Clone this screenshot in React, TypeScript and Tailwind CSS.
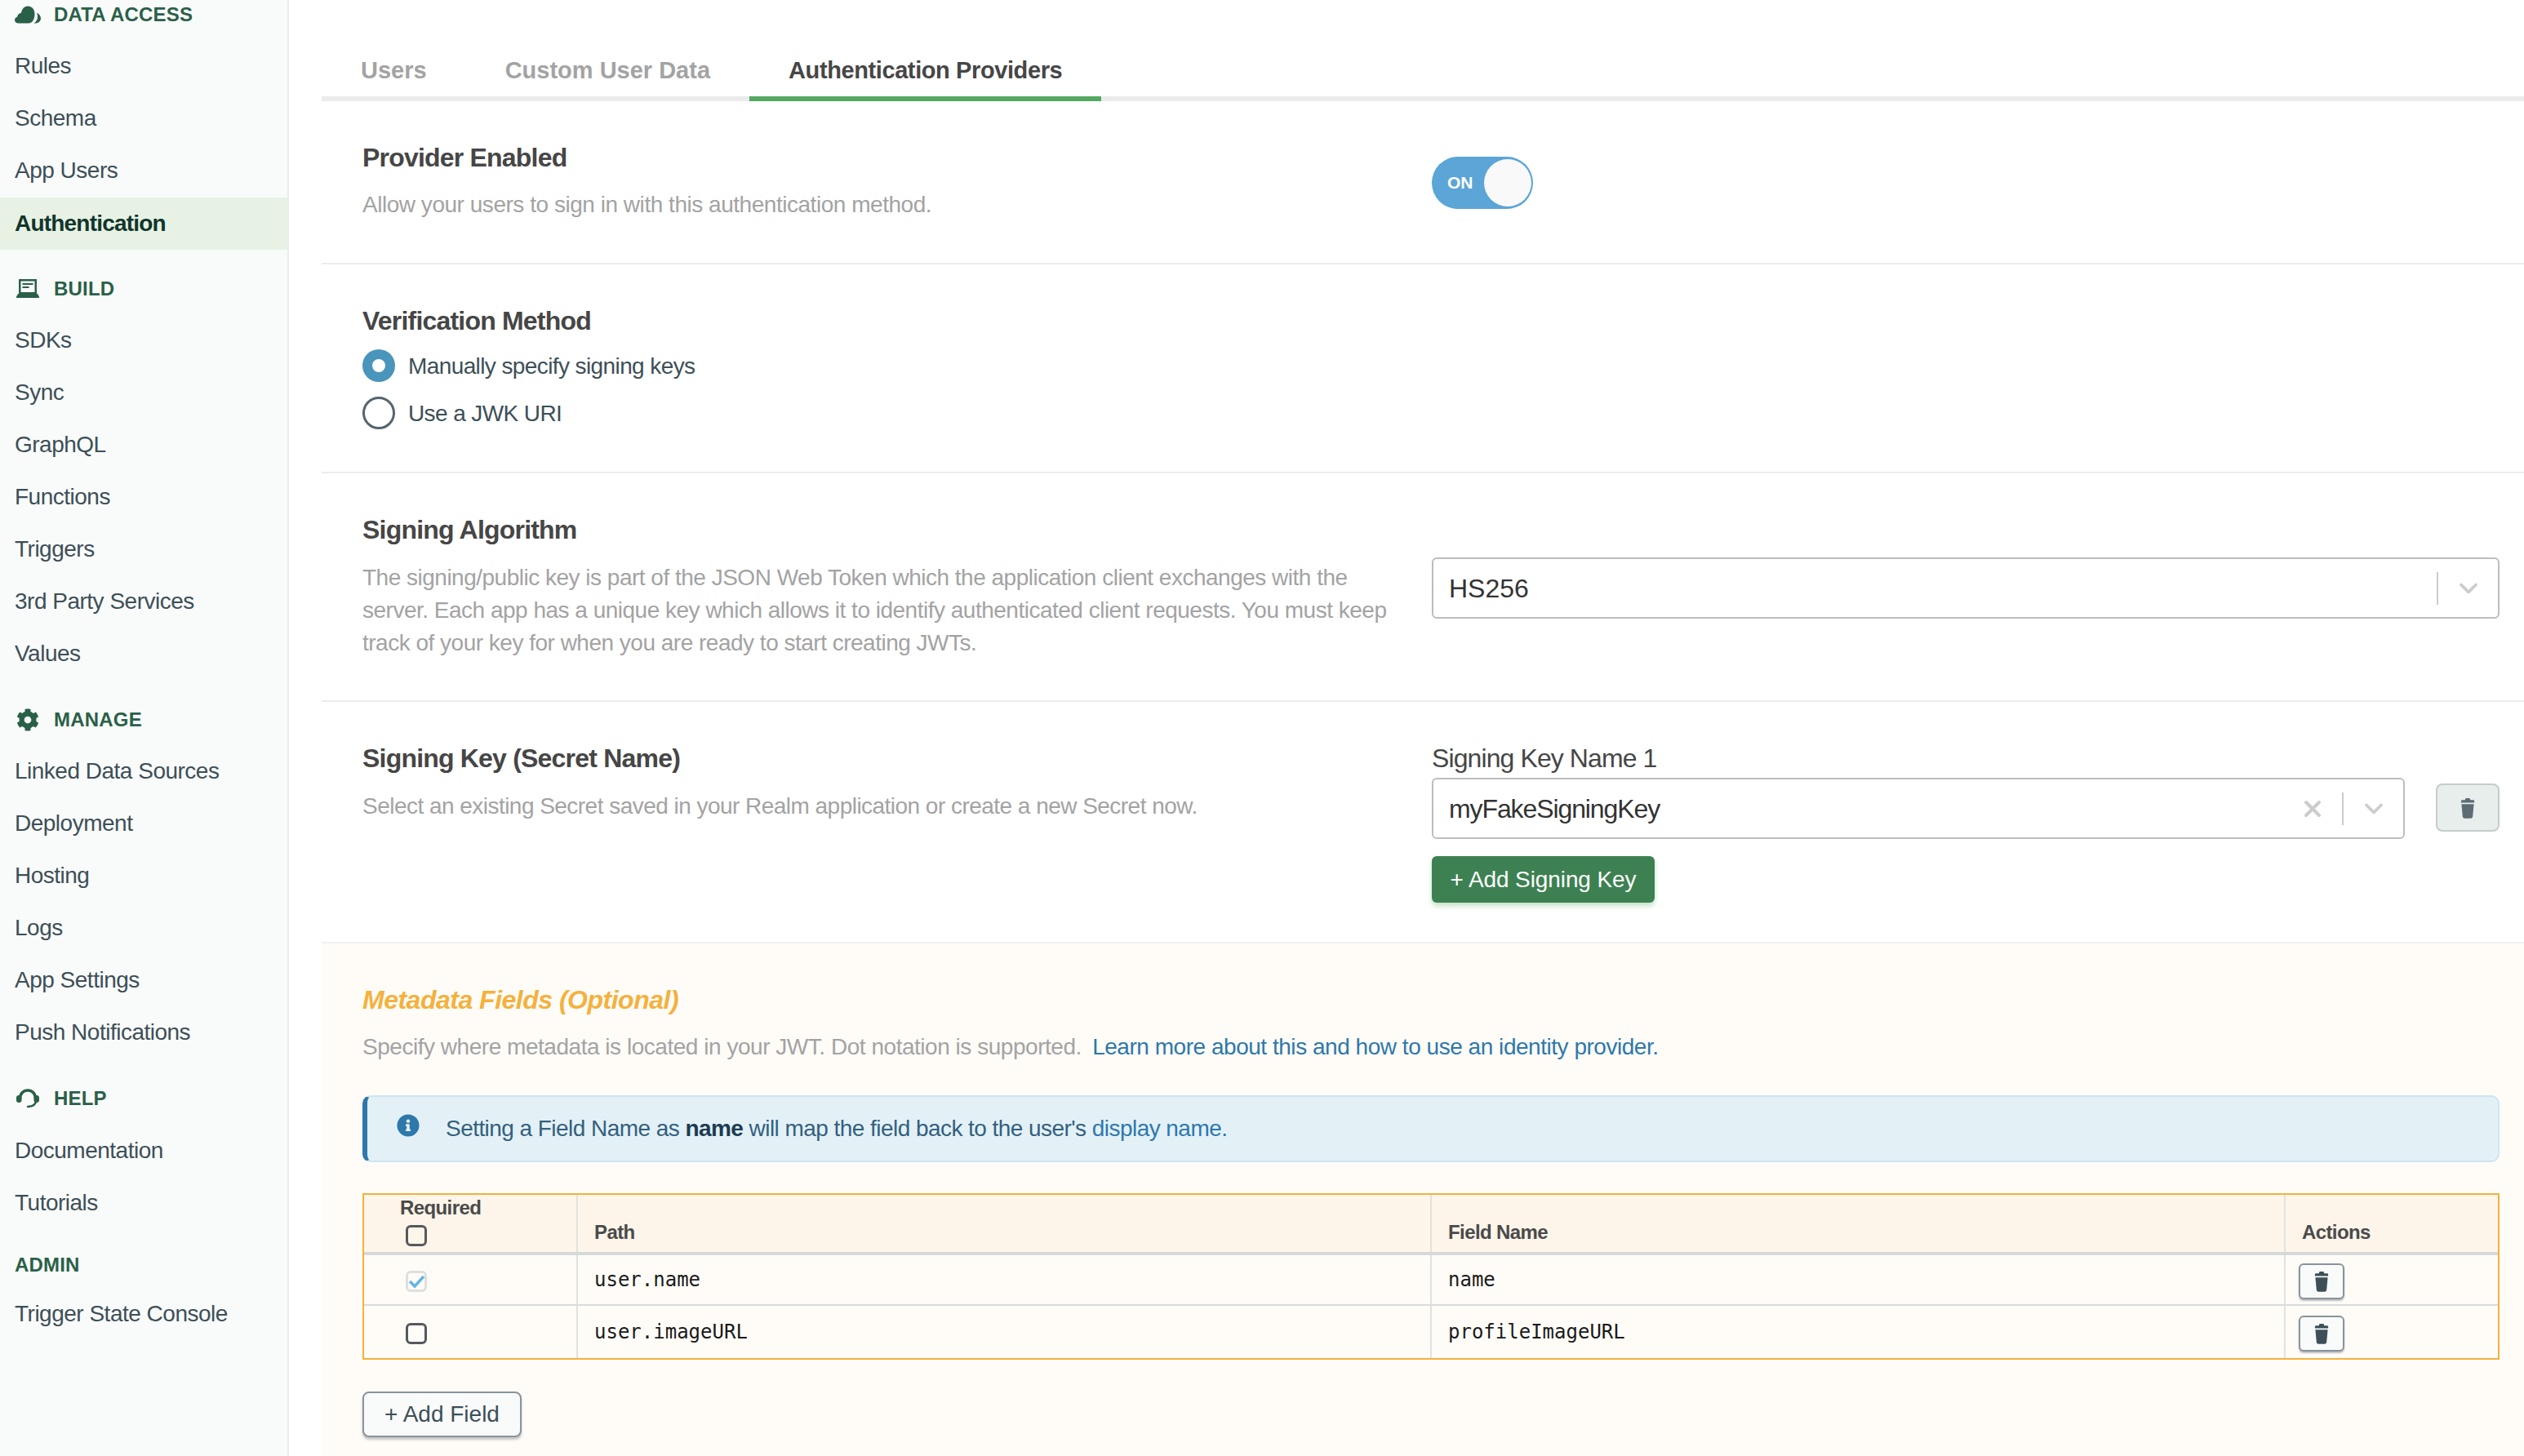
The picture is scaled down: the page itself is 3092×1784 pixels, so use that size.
import { ChevronDown, X } from "lucide-react";
import { FaCog, FaInfoCircle } from "react-icons/fa";

const sans = "font-['Liberation_Sans',Arial,sans-serif]";

function CloudIcon() {
  return (
    <svg viewBox="0 0 32 22" className="h-[22px] w-8 fill-[#2a6048]" aria-hidden="true">
      <path d="M4 21.500c-2.400 0-4-1.700-4-3.900 0-2 1.300-3.400 3-3.900C3.600 10.700 5.600 9 8 9c.6-4.800 3.700-8.500 8-8.500 4.800 0 8.500 3.800 8.500 9.500 0 5.800-2.500 11.500-7.500 11.500z" />
      <path d="M27 8.500c3 1.600 5 4.300 5 7 0 3.300-2.700 6-7 6h-1.500c3-2 4.600-4.800 4.600-7.800 0-1.800-.4-3.500-1.100-5.200z" />
    </svg>
  );
}

function BuildIcon() {
  return (
    <svg viewBox="0 0 28 23" className="h-[23px] w-7 fill-[#2a6048]" aria-hidden="true">
      <path fillRule="evenodd" d="M3 0h22v18.500H3zM5.500 2.500v13.500h17V2.500z" />
      <rect x="7.500" y="5" width="13" height="2" />
      <rect x="7.500" y="9" width="8" height="2" />
      <path d="M2 18h24l2 3.500a1.200 1.200 0 0 1-1 1.500H1a1.200 1.200 0 0 1-1-1.500z" />
    </svg>
  );
}

function HelpIcon() {
  return (
    <svg viewBox="0 0 28 24" className="h-6 w-7" aria-hidden="true">
      <path d="M4.500 12.500C4.500 6 8.500 2 14 2s9.500 4 9.500 10.500" fill="none" stroke="#2a6048" strokeWidth="3.500" />
      <rect x="0" y="8" width="6.500" height="9" rx="3.200" fill="#2a6048" />
      <rect x="21.500" y="8" width="6.500" height="9" rx="3.200" fill="#2a6048" />
      <path d="M24 15c0 4-3.500 6.500-10 7" fill="none" stroke="#2a6048" strokeWidth="2.500" strokeLinecap="round" />
    </svg>
  );
}

function TrashIcon({ className }: { className: string }) {
  return (
    <svg viewBox="0 0 20 24" className={className} aria-hidden="true">
      <path d="M2.500 4.300a1.300 1.300 0 0 1 1.300-1.300H7l.7-2h4.600l.7 2h3.200a1.300 1.300 0 0 1 1.300 1.300V6h-15z" />
      <path d="M3 7.500h14l-1.300 14.300a2 2 0 0 1-2 1.900H6.300a2 2 0 0 1-2-1.900z" />
    </svg>
  );
}

function Checkbox({ checked = false }: { checked?: boolean }) {
  return (
    <svg viewBox="0 0 26 26" className="h-[26px] w-[26px]" aria-hidden="true">
      <rect x="1.500" y="1.500" width="23" height="23" rx="4.500" fill="none" stroke={checked ? "#dfdfdd" : "#55595c"} strokeWidth="3" />
      {checked && <path d="M5 13l6 6L22 7" fill="none" stroke="#62b5e5" strokeWidth="3.500" />}
    </svg>
  );
}

const navGroups = [
  { title: "DATA ACCESS", icon: <CloudIcon />, head: "h-[49px] pb-[13px]", items: ["Rules", "Schema", "App Users", "Authentication"] },
  { title: "BUILD", icon: <BuildIcon />, head: "h-[79px] pt-[16px]", items: ["SDKs", "Sync", "GraphQL", "Functions", "Triggers", "3rd Party Services", "Values"] },
  { title: "MANAGE", icon: <FaCog className="h-7 w-7 text-[#2a6048]" />, head: "h-[80px] pt-[18px]", items: ["Linked Data Sources", "Deployment", "Hosting", "Logs", "App Settings", "Push Notifications"] },
  { title: "HELP", icon: <HelpIcon />, head: "h-[81px] pt-[16px]", items: ["Documentation", "Tutorials"] },
  { title: "ADMIN", icon: null, head: "h-[72px] pt-[16px]", items: ["Trigger State Console"] },
];

function Sidebar() {
  return (
    <aside className="w-[354px] shrink-0 border-r-2 border-[#e7eeec] bg-[#f9fbfa]">
      {navGroups.map((group) => (
        <div key={group.title}>
          <div className={`flex items-center gap-[16px] pl-[18px] ${group.head}`}>
            {group.icon && <span className="flex w-8 justify-center">{group.icon}</span>}
            <span className="text-[24px] font-bold tracking-[0.2px] text-[#2a6048]">{group.title}</span>
          </div>
          {group.items.map((item) =>
            item === "Authentication" ? (
              <div key={item} className="mt-px flex h-16 items-center bg-[#e7f2e5] pl-[18px] text-[28px] font-bold tracking-[-0.8px] text-[#11362b]">
                {item}
              </div>
            ) : (
              <div key={item} className="flex h-16 items-center pl-[18px] text-[28px] tracking-[-0.5px] text-[#3d4f58]">
                {item}
              </div>
            ),
          )}
        </div>
      ))}
    </aside>
  );
}

function Title({ children }: { children: string }) {
  return <h2 className="text-[32px] font-bold leading-10 tracking-[-0.8px] text-[#464646]">{children}</h2>;
}

function Select({ value, clearable = false }: { value: string; clearable?: boolean }) {
  return (
    <div className="flex h-[75px] flex-1 items-center rounded-md border-2 border-[#bdbdbd] bg-white pl-[19px] pr-[18px]">
      <span className={`flex-1 text-[32px] text-[#333333] ${clearable ? "tracking-[-1.1px]" : "tracking-normal"}`}>{value}</span>
      {clearable && <X className="mr-[20px] h-8 w-8 text-[#cccccc]" strokeWidth={3} />}
      <span className="mr-[19px] h-10 w-0.5 bg-[#cccccc]" />
      <ChevronDown className="h-9 w-9 text-[#cccccc]" strokeWidth={2.5} />
    </div>
  );
}

function Radio({ on, label }: { on: boolean; label: string }) {
  return (
    <label className="flex h-[58px] items-center gap-4 text-[28px] tracking-[-0.6px] text-[#3d4f58]">
      {on ? (
        <span className="flex h-10 w-10 items-center justify-center rounded-full bg-[#4a95bb]">
          <span className="h-4 w-4 rounded-full bg-white" />
        </span>
      ) : (
        <span className="h-10 w-10 rounded-full border-[3px] border-[#55656f]" />
      )}
      <span className="mt-0.5">{label}</span>
    </label>
  );
}

const fieldRows = [
  { path: "user.name", field: "name", required: true, height: "h-[62px]", line: "border-b-2 border-[#d9dcdd]" },
  { path: "user.imageURL", field: "profileImageURL", required: false, height: "h-[64px]", line: "" },
];

const gridCols = "grid grid-cols-[260px_1046px_1046px_1fr]";

function FieldTable() {
  return (
    <div className="mt-[38px] border-2 border-[#f4b13d]">
      <div className={`${gridCols} h-[74px] border-b-4 border-[#d6d9da] bg-[#fdf5e9] text-[24px] font-bold tracking-[-0.6px] text-[#4a4a4a]`}>
        <div className="flex flex-col pl-[44px] pt-[2px]">
          <span className="leading-7">Required</span>
          <span className="ml-[7px] mt-[7px]"><Checkbox /></span>
        </div>
        <div className="flex items-end border-l-2 border-[#e1e1df] pb-[6px] pl-5">Path</div>
        <div className="flex items-end border-l-2 border-[#e1e1df] pb-[6px] pl-5">Field Name</div>
        <div className="flex items-end border-l-2 border-[#e1e1df] pb-[6px] pl-5">Actions</div>
      </div>
      {fieldRows.map((row) => (
        <div key={row.path} className={`${gridCols} ${row.height} ${row.line} font-['DejaVu_Sans_Mono',monospace] text-[24px] text-[#1a1a1a]`}>
          <div className="flex items-center pl-[51px] pt-[3px]"><Checkbox checked={row.required} /></div>
          <div className="flex items-center border-l-2 border-[#e1e1df] pl-5">{row.path}</div>
          <div className="flex items-center border-l-2 border-[#e1e1df] pl-5">{row.field}</div>
          <div className="flex items-center border-l-2 border-[#e1e1df] pl-4 pt-[3px]">
            <button className="flex h-[44px] w-[56px] items-center justify-center rounded-md border-2 border-[#88949b] bg-[#f9fbfa] shadow-[0_2px_2px_rgba(60,70,80,0.35)]" type="button">
              <TrashIcon className="h-[26px] w-[22px] fill-[#3d4f58]" />
            </button>
          </div>
        </div>
      ))}
    </div>
  );
}

export default function App() {
  return (
    <div className={`flex h-[1784px] w-[3092px] overflow-hidden bg-white ${sans}`}>
      <Sidebar />
      <main className="ml-10 flex flex-1 flex-col">
        <nav className="flex h-[124px] border-b-[6px] border-[#ebebed] text-[29px] font-bold">
          <a className="flex h-[124px] items-end px-12 pb-[16px] text-[#a3a3a3]">Users</a>
          <a className="flex h-[124px] items-end px-12 pb-[16px] text-[#a3a3a3]">Custom User Data</a>
          <a className="flex h-[124px] items-end border-b-[6px] border-[#54a862] px-12 pb-[10px] tracking-[-0.4px] text-[#464646]">Authentication Providers</a>
        </nav>

        <section className="flex h-[200px] border-b-2 border-[#ececec] pl-[50px] pr-[30px] pt-[49px]">
          <div className="w-[1310px]">
            <Title>Provider Enabled</Title>
            <p className="mt-[18px] text-[28px] leading-10 tracking-[-0.47px] text-[#a3a3a3]">Allow your users to sign in with this authentication method.</p>
          </div>
          <div className="mt-[19px] flex h-16 w-[124px] items-center justify-between rounded-full bg-[#5ba5d7] pl-[19px] pr-[2px] text-[21px] font-bold text-white">
            ON
            <span className="h-[58px] w-[58px] rounded-full bg-[#f9f9f9]" />
          </div>
        </section>

        <section className="h-[256px] border-b-2 border-[#ececec] pl-[50px] pt-[49px]">
          <Title>Verification Method</Title>
          <div className="mt-[6px]">
            <Radio on label="Manually specify signing keys" />
            <Radio on={false} label="Use a JWK URI" />
          </div>
        </section>

        <section className="flex h-[280px] border-b-2 border-[#ececec] pl-[50px] pr-[30px] pt-[49px]">
          <div className="w-[1310px]">
            <Title>Signing Algorithm</Title>
            <p className="mt-[19px] w-[1260px] text-[28px] leading-10 tracking-[-0.5px] text-[#a3a3a3]">
              The signing/public key is part of the JSON Web Token which the application client exchanges with the server. Each app has a unique key which allows it to identify authenticated client requests. You must keep track of your key for when you are ready to start creating JWTs.
            </p>
          </div>
          <div className="mt-[54px] flex flex-1 items-start"><Select value="HS256" /></div>
        </section>

        <section className="flex h-[294px] pl-[50px] pr-[30px] pt-[49px]">
          <div className="w-[1310px]">
            <Title>Signing Key (Secret Name)</Title>
            <p className="mt-[19px] text-[28px] leading-10 tracking-[-0.53px] text-[#a3a3a3]">Select an existing Secret saved in your Realm application or create a new Secret now.</p>
          </div>
          <div className="flex-1">
            <div className="h-11 text-[32px] leading-10 tracking-[-0.9px] text-[#464646]">Signing Key Name 1</div>
            <div className="flex items-start gap-[38px]">
              <Select value="myFakeSigningKey" clearable />
              <button className="mt-[7px] flex h-[59px] w-[78px] items-center justify-center rounded-lg border-2 border-[#c5cccc] bg-[#e7eeec]" type="button">
                <TrashIcon className="h-[26px] w-[22px] fill-[#5d6c74]" />
              </button>
            </div>
            <button className="mt-[21px] h-[57px] w-[273px] rounded-md bg-[#3d8152] text-[28px] tracking-[-0.1px] text-white shadow-[0_4px_6px_rgba(84,168,98,0.35)]" type="button">+ Add Signing Key</button>
          </div>
        </section>

        <section className="flex-1 border-t-2 border-[#f1efec] bg-[#fffcf8] pl-[50px] pr-[30px] pt-[49px]">
          <h2 className="text-[32px] font-bold italic leading-10 tracking-[-0.5px] text-[#f4b13d]">Metadata Fields (Optional)</h2>
          <p className="mt-[18px] text-[28px] leading-10 tracking-[-0.47px] text-[#a3a3a3]">
            Specify where metadata is located in your JWT. Dot notation is supported.{" "}
            <a className="ml-1.5 text-[#2e78aa]">Learn more about this and how to use an identity provider.</a>
          </p>
          <div className="mt-[39px] flex h-[82px] items-center rounded-[10px] border-2 border-l-[6px] border-[#cfe4f2] border-l-[#2e78aa] bg-[#e3f1f7] pl-[36px] text-[28px] tracking-[-0.55px] text-[#33607f]">
            <FaInfoCircle className="mb-2 mr-[32px] h-7 w-7 text-[#2e78aa]" />
            <span>
              Setting a Field Name as <b className="text-[#1d3c52]">name</b> will map the field back to the user's <a className="text-[#2e78b0]">display name.</a>
            </span>
          </div>
          <FieldTable />
          <button className="mt-[39px] h-[56px] w-[195px] rounded-lg border-2 border-[#88949b] bg-[#f9fbfa] text-[28px] text-[#3d4f58] shadow-[0_3px_3px_rgba(60,70,80,0.3)]" type="button">+ Add Field</button>
        </section>
      </main>
    </div>
  );
}
